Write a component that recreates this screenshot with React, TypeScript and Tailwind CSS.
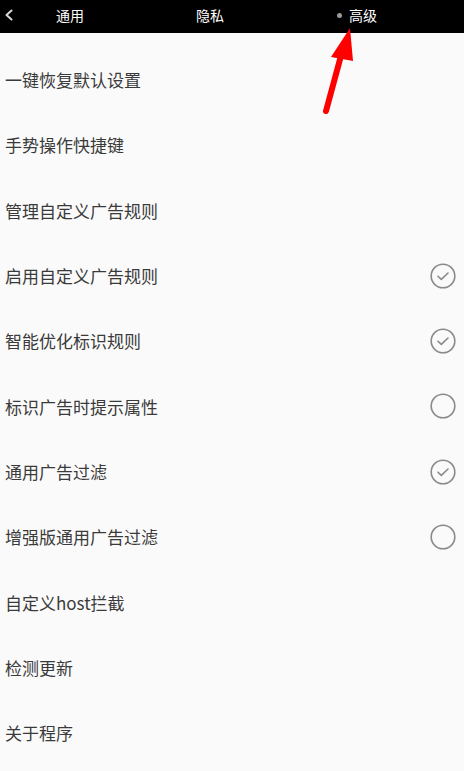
const items: { label: string; check?: boolean }[] = [
  { label: "一键恢复默认设置" },
  { label: "手势操作快捷键" },
  { label: "管理自定义广告规则" },
  { label: "启用自定义广告规则", check: true },
  { label: "智能优化标识规则", check: true },
  { label: "标识广告时提示属性", check: false },
  { label: "通用广告过滤", check: true },
  { label: "增强版通用广告过滤", check: false },
  { label: "自定义host拦截" },
  { label: "检测更新" },
  { label: "关于程序" },
];

function CheckCircle({ checked }: { checked: boolean }) {
  return (
    <svg width="26" height="26" viewBox="0 0 26 26" fill="none" stroke="#8a8a8a" strokeWidth="1.6" strokeLinecap="round" strokeLinejoin="round">
      <circle cx="13" cy="13" r="11.8" />
      {checked && <path d="M8 13.2l3.3 3.2 6.7-6.4" />}
    </svg>
  );
}

export default function App() {
  return (
    <div
      className="relative w-[464px] h-[771px] bg-[#fafafa] overflow-hidden"
      style={{ fontFamily: '"Noto Sans CJK SC", Roboto, sans-serif' }}
    >
      {/* tab bar */}
      <div className="h-[33px] bg-black text-white text-[14px] flex items-center pb-[3px]">
        <div className="w-[56px] pl-[4px] flex items-center">
          <svg width="10" height="12" viewBox="0 0 10 12" fill="none" stroke="#d8d8d8" strokeWidth="2" strokeLinecap="round" strokeLinejoin="round">
            <path d="M7.5 1.5L2.5 6l5 4.5" />
          </svg>
        </div>
        <span className="w-[140px]">通用</span>
        <span className="w-[141px]">隐私</span>
        <div className="flex items-center gap-[7px]">
          <span className="w-[5px] h-[5px] rounded-full bg-[#9a9a9a]"></span>
          <span>高级</span>
        </div>
      </div>

      <div className="pt-[14px]">
        {items.map((it) => (
          <div key={it.label} className="h-[65.33px] flex items-center justify-between pl-[5px] pr-[8px]">
            <span className="text-[17px] text-[#3a3a3a]">{it.label}</span>
            {it.check !== undefined && <CheckCircle checked={it.check} />}
          </div>
        ))}
      </div>

      {/* annotation arrow */}
      <svg className="absolute left-0 top-0 pointer-events-none" width="464" height="771" viewBox="0 0 464 771">
        <path d="M326 111L342 52" stroke="#ff0000" strokeWidth="6" strokeLinecap="round" />
        <polygon points="350,28 331,57 353,61" fill="#ff0000" />
      </svg>
    </div>
  );
}
